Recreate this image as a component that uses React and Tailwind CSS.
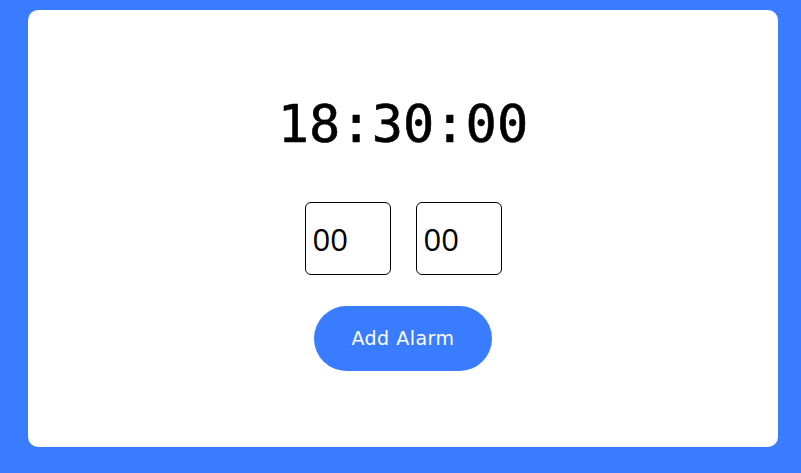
import React, { useState } from "react";

const BLUE = "bg-[#3a7cff]";

const TimeBox = ({ value, onChange }) => (
  <input
    type="text"
    value={value}
    onChange={(e) => onChange(e.target.value)}
    className="w-[86px] h-[73px] border border-black rounded-md pl-[7px] text-[31px] text-black outline-none font-['Open_Sans',sans-serif]"
  />
);

export default function App() {
  const [hours, setHours] = useState("00");
  const [minutes, setMinutes] = useState("00");

  return (
    <div className={`${BLUE} w-full h-[473px] pt-[10px] px-[28px]`}>
      <div className="bg-white rounded-[10px] h-[437px] w-[750px] flex flex-col items-center">
        {/* clock */}
        <div className="mt-[86px] h-[56px] flex items-center text-[52px] leading-none text-black [-webkit-text-stroke:0.6px_black] font-['DejaVu_Sans_Mono',monospace]">
          18:30:00
        </div>

        {/* alarm inputs */}
        <div className="mt-[50px] flex gap-[25px]">
          <TimeBox value={hours} onChange={setHours} />
          <TimeBox value={minutes} onChange={setMinutes} />
        </div>

        {/* button */}
        <button
          className={`${BLUE} mt-[31px] w-[178px] h-[65px] rounded-full text-white text-[19px] tracking-[0.5px] font-['DejaVu_Sans',sans-serif]`}
        >
          Add Alarm
        </button>
      </div>
    </div>
  );
}
